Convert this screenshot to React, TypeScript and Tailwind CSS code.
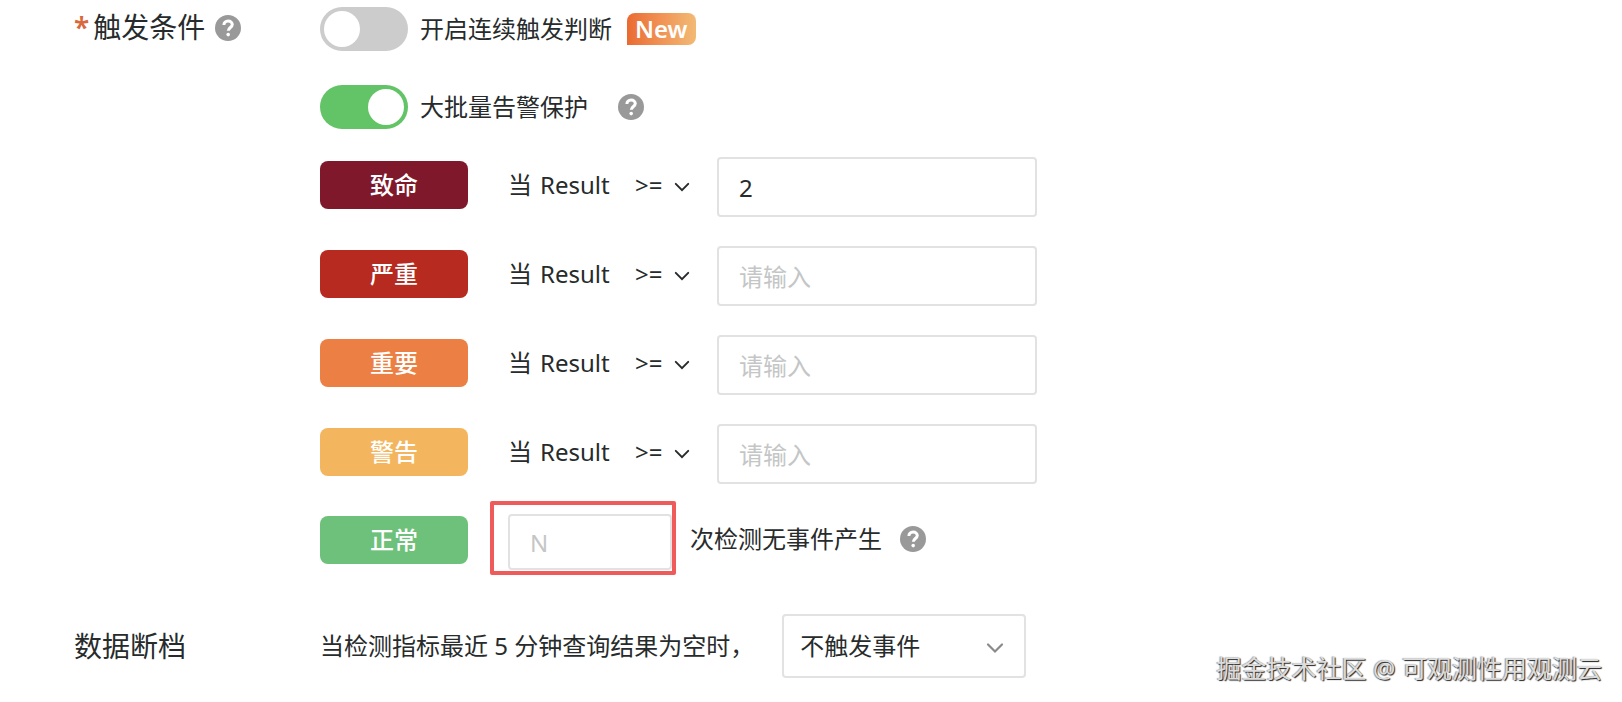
import React, { useId, useState } from 'react';

interface Level {
  name: string;
  color: string;
  value: string;
}

const LEVELS: Level[] = [
  { name: '致命', color: 'bg-[#80182c]', value: '2' },
  { name: '严重', color: 'bg-[#b62a20]', value: '' },
  { name: '重要', color: 'bg-[#ec7f43]', value: '' },
  { name: '警告', color: 'bg-[#f3b65e]', value: '' },
];

const HelpIcon: React.FC = () => (
  <button type="button" aria-label="帮助" className="block shrink-0">
    <svg width="26" height="26" viewBox="0 0 26 26" fill="none" className="block">
      <circle cx="13" cy="13" r="13" fill="#999999" />
      <path
        d="M8.9 10.1C8.9 7.6 10.7 6 13.1 6C15.6 6 17.3 7.5 17.3 9.6C17.3 12.4 13.3 12.6 13.3 15.8"
        stroke="#fff"
        strokeWidth="3"
      />
      <circle cx="13.2" cy="19.6" r="1.8" fill="#fff" />
    </svg>
  </button>
);

const Chevron: React.FC<{ className?: string }> = ({ className }) => (
  <svg viewBox="0 0 18 12" fill="none" stroke="currentColor" strokeWidth="2.2" className={className}>
    <path d="M2 2.5L9 9.5L16 2.5" strokeLinecap="round" />
  </svg>
);

interface SwitchProps {
  label: string;
  defaultChecked?: boolean;
  children?: React.ReactNode;
}

const SwitchRow: React.FC<SwitchProps> = ({ label, defaultChecked, children }) => {
  const id = useId();
  return (
    <div className="flex h-11 items-center">
      <input
        id={id}
        type="checkbox"
        role="switch"
        defaultChecked={defaultChecked}
        className="h-11 w-[88px] shrink-0 cursor-pointer appearance-none rounded-full bg-[#cccccc] p-1 before:block before:size-9 before:rounded-full before:bg-white checked:bg-[#62c466] checked:before:ml-11"
      />
      <label htmlFor={id} className="ml-3">{label}</label>
      {children}
    </div>
  );
};

const LevelBadge: React.FC<{ name: string; color: string }> = ({ name, color }) => (
  <span className={`flex h-12 w-[148px] shrink-0 items-center justify-center rounded-lg font-medium text-white ${color}`}>
    {name}
  </span>
);

const LevelRow: React.FC<{ level: Level }> = ({ level }) => {
  const [value, setValue] = useState(level.value);
  return (
    <div className="flex items-start">
      <div className="flex h-14 items-center">
        <LevelBadge name={level.name} color={level.color} />
        <span className="ml-10 flex w-[127px] gap-2 whitespace-nowrap">
          <span>当</span>
          <span>Result</span>
        </span>
        <div className="relative flex items-center">
          <select aria-label={`${level.name}比较符`} className="w-[55px] appearance-none bg-transparent outline-none">
            <option>&gt;=</option>
            <option>&gt;</option>
            <option>&lt;=</option>
            <option>&lt;</option>
          </select>
          <Chevron className="pointer-events-none absolute right-0 mt-1 h-3 w-4" />
        </div>
      </div>
      <input
        aria-label={`${level.name}阈值`}
        placeholder="请输入"
        value={value}
        onChange={(e) => setValue(e.target.value)}
        className="ml-[27px] h-[60px] w-80 rounded border-2 border-[#e2e2e2] px-5 outline-none placeholder:text-[#c4c6c6]"
      />
    </div>
  );
};

const App: React.FC = () => {
  return (
    <div className="relative min-h-screen bg-white pt-[7px] pb-6 pl-[74px] font-['Noto_Sans','Noto_Sans_CJK_SC',sans-serif] text-2xl text-[#272b2b]">
      {/* 触发条件 */}
      <section className="flex items-start">
        <div className="flex h-[42px] w-[246px] shrink-0 items-center">
          <span className="mr-1 text-[28px] font-semibold text-[#d9683c]">*</span>
          <h2 className="mr-2.5 text-[28px]">触发条件</h2>
          <HelpIcon />
        </div>

        <div>
          <SwitchRow label="开启连续触发判断">
            <span className="ml-[15px] flex h-8 items-center rounded-lg rounded-bl-none bg-linear-to-r from-[#ea6a31] to-[#f2ba75] px-2 font-semibold text-white">
              New
            </span>
          </SwitchRow>
          <div className="mt-[34px]">
            <SwitchRow label="大批量告警保护" defaultChecked>
              <div className="ml-[30px]">
                <HelpIcon />
              </div>
            </SwitchRow>
          </div>

          <div className="mt-7 flex flex-col gap-[29px]">
            {LEVELS.map((level) => (
              <LevelRow key={level.name} level={level} />
            ))}
          </div>

          <div className="mt-[17px] flex items-start">
            <div className="pt-[15px]">
              <LevelBadge name="正常" color="bg-[#6dc17a]" />
            </div>
            <div className="ml-[22px] h-[74px] w-[186px] rounded-xs border-4 border-[#ef5b5b] pt-[9px] pl-[14px]">
              <input
                aria-label="检测次数"
                placeholder="N"
                className="block h-14 w-full rounded border-2 border-[#e2e2e2] px-5 outline-none placeholder:text-[#c4c6c6]"
              />
            </div>
            <div className="flex items-center pt-[22px] pl-[14px]">
              <span className="mr-[18px]">次检测无事件产生</span>
              <HelpIcon />
            </div>
          </div>
        </div>
      </section>

      {/* 数据断档 */}
      <section className="mt-[39px] flex items-center">
        <h2 className="w-[246px] shrink-0 pt-0.5 text-[28px]">数据断档</h2>
        <label htmlFor="gap-action">当检测指标最近 5 分钟查询结果为空时，</label>
        <div className="relative ml-7 flex items-center">
          <select
            id="gap-action"
            className="h-16 w-[244px] appearance-none rounded border-2 border-[#e2e2e2] bg-white px-4 outline-none"
          >
            <option>不触发事件</option>
            <option>触发事件</option>
          </select>
          <Chevron className="pointer-events-none absolute right-[22px] mt-1 h-3 w-[18px] text-[#8a8a8a]" />
        </div>
      </section>

      <div className="absolute right-5 bottom-[17px] text-[25px] text-[#dcdcdc] [text-shadow:1px_1px_1px_#222,-1px_0_1px_#999]">
        掘金技术社区 @ 可观测性用观测云
      </div>
    </div>
  );
};

export default App;
